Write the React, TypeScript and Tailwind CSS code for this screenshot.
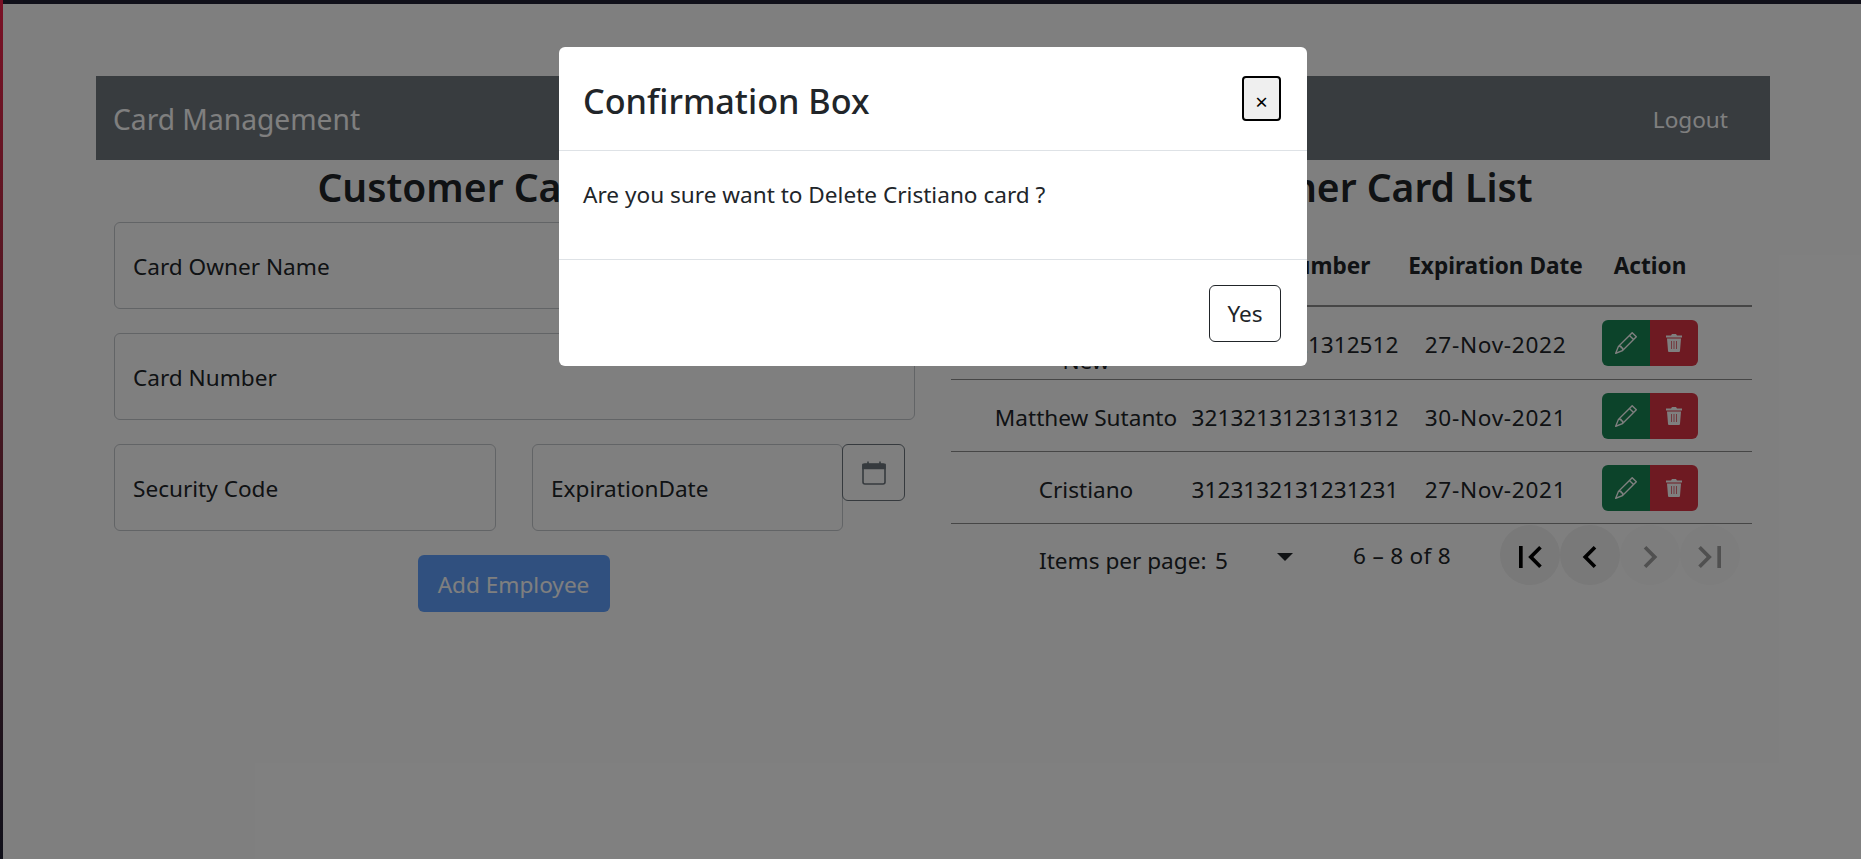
import { BsPencil } from "react-icons/bs";

const rows = [
  { name: "Test New", number: "3213213121312512", date: "27-Nov-2022" },
  { name: "Matthew Sutanto", number: "3213213123131312", date: "30-Nov-2021" },
  { name: "Cristiano", number: "3123132131231231", date: "27-Nov-2021" },
];

const pagerIcons = [
  { d: "M18.41 16.59L13.82 12l4.59-4.59L17 6l-6 6 6 6zM6 6h2v12H6z", on: true },
  { d: "M15.41 7.41 14 6l-6 6 6 6 1.41-1.41L10.83 12z", on: true },
  { d: "M10 6 8.59 7.41 13.17 12l-4.58 4.59L10 18l6-6z", on: false },
  { d: "M5.59 7.41 10.18 12l-4.59 4.59L7 18l6-6-6-6zM16 6h2v12h-2z", on: false },
];

function TrashIcon() {
  return (
    <svg viewBox="0 0 16 18" className="h-[18px] w-[16px] fill-white" fillRule="evenodd">
      <path d="M6 0h4l1 1.5h5v2H0v-2h5zM1 4.5h14l-1 12.2c0 .7-.6 1.3-1.3 1.3H3.3c-.7 0-1.3-.6-1.3-1.3zM5 7v8h.7V7zM7.65 7v8h.7V7zM10.3 7v8h.7V7z" />
    </svg>
  );
}

function CalendarIcon() {
  return (
    <svg viewBox="0 0 24 24" className="h-[24px] w-[24px] fill-none stroke-[#6c757d]">
      <rect x="1" y="3" width="22" height="20" rx="2" strokeWidth="1.6" />
      <path d="M1 3.5h22v4H1zM6 0.5v3M18 0.5v3" strokeWidth="1.6" className="fill-[#6c757d]" />
    </svg>
  );
}

function Field({ label, className }: { label: string; className: string }) {
  return (
    <div className={`flex h-[87px] items-center rounded-[6px] border border-[#c4c8cc] bg-white px-[18px] pt-[3px] text-[22.6px] text-[#212529] ${className}`}>
      {label}
    </div>
  );
}

function CardForm() {
  return (
    <section className="px-[18px]">
      <h2 className="mb-2 h-[54px] text-center text-[39px] leading-[54px] font-semibold whitespace-nowrap text-[#212529]">Customer Card Form</h2>
      <Field label="Card Owner Name" className="mb-[24px]" />
      <Field label="Card Number" className="mb-[24px]" />
      <div className="flex items-start">
        <Field label="Security Code" className="w-[382px]" />
        <Field label="ExpirationDate" className="ml-[36px] w-[311px]" />
        <button className="-ml-px flex h-[57px] w-[63px] items-center justify-center rounded-[6px] border border-[#6c757d]">
          <CalendarIcon />
        </button>
      </div>
      <div className="mt-[24px] flex justify-center pr-[2px]">
        <button className="h-[57px] w-[192px] rounded-[6px] bg-[#61a1fe] pt-[2px] text-[22.6px] text-white">Add Employee</button>
      </div>
    </section>
  );
}

function CardTable() {
  return (
    <section className="px-[18px]">
      <h2 className="mb-2 h-[54px] text-center text-[39px] leading-[54px] font-semibold whitespace-nowrap text-[#212529]">Customer Card List</h2>
      <table className="w-full table-fixed border-collapse text-center text-[22.6px] text-[#212529]">
        <colgroup>
          <col className="w-[37px]" />
          <col className="w-[196px]" />
          <col className="w-[222px]" />
          <col className="w-[179px]" />
          <col className="w-[130px]" />
          <col />
        </colgroup>
        <thead>
          <tr className="h-[84px] border-b-2 border-[#8c8c8c] font-bold">
            <th />
            <th className="pt-[4px] font-bold">Name</th>
            <th className="pt-[4px] font-bold whitespace-nowrap">Card Number</th>
            <th className="pt-[4px] font-bold whitespace-nowrap">Expiration Date</th>
            <th className="pt-[4px] font-bold">Action</th>
            <th />
          </tr>
        </thead>
        <tbody>
          {rows.map((row) => (
            <tr key={row.number} className="h-[72px] border-b border-[#8c8c8c]">
              <td />
              <td className="px-1 leading-[32px]">{row.name === "Test New" ? <span className="relative top-[4px] block h-[72px] pt-[2px]">Test<br />New</span> : <span className="inline-block pt-[4px] whitespace-nowrap">{row.name}</span>}</td>
              <td className="pt-[4px]">{row.number}</td>
              <td className="pt-[4px] tracking-[0.7px]">{row.date}</td>
              <td>
                <div className="flex justify-center">
                  <button className="flex h-[46px] w-[48px] items-center justify-center rounded-l-[6px] bg-[#198754] text-white"><BsPencil size={22} /></button>
                  <button className="flex h-[46px] w-[48px] items-center justify-center rounded-r-[6px] bg-[#dc3545]"><TrashIcon /></button>
                </div>
              </td>
              <td />
            </tr>
          ))}
        </tbody>
      </table>
      <div className="flex items-center pt-[1px] pl-[88px] text-[22.6px] text-[#212529]">
        <span className="w-[176px] pt-[12px] whitespace-nowrap">Items per page:</span>
        <span className="w-[62px] pt-[12px]">5</span>
        <span className="mt-[4px] h-0 w-0 border-x-[8px] border-t-[8px] border-x-transparent border-t-[#212529]" />
        <span className="ml-[60px] w-[147px] pt-[1px] tracking-[0.3px] whitespace-nowrap">6 – 8 of 8</span>
        <div className="flex">
          {pagerIcons.map((icon, i) => (
            <span key={i} className={`flex h-[60px] w-[60px] items-center justify-center rounded-full pt-[3px] ${icon.on ? "bg-[#f2f2f2]" : "bg-[#fafafa]"}`}>
              <svg viewBox="0 0 24 24" className={`h-[44px] w-[44px] ${icon.on ? "fill-black" : "fill-[#a0a0a0]"}`}>
                <path d={icon.d} />
              </svg>
            </span>
          ))}
        </div>
      </div>
    </section>
  );
}

export default function App() {
  return (
    <div className="relative h-[859px] w-[1861px] overflow-hidden bg-white font-['Noto_Sans',sans-serif]">
      <div className="px-[96px] pt-[76px]">
        <nav className="flex h-[84px] w-[1674px] items-center justify-between bg-[#70787f] pt-[2px] pr-[42px] pl-[17px] text-white">
          <span className="text-[28.2px]">Card Management</span>
          <span className="pt-[1px] text-[22.6px]">Logout</span>
        </nav>
        <div className="grid w-[1674px] grid-cols-2">
          <CardForm />
          <CardTable />
        </div>
      </div>

      {/* backdrop and modal */}
      <div className="absolute inset-0 flex justify-center bg-black/50 pt-[47px] pl-[5px]">
        <div className="flex h-[319px] w-[748px] flex-col rounded-[6px] bg-white text-[#212529]">
          <div className="flex h-[104px] items-start justify-between border-b border-[#dee2e6] pt-[32px] pr-[26px] pl-[24px]">
            <h1 className="text-[34.2px] leading-[44px] font-medium">Confirmation Box</h1>
            <button className="-mt-[3px] flex h-[45px] w-[39px] items-center justify-center rounded-[4px] border-2 border-black bg-[#efefef] pt-[6px] text-[22px] text-black">×</button>
          </div>
          <div className="h-[109px] border-b border-[#dee2e6] px-[24px] pt-[28px] text-[22.6px] leading-[32px]">Are you sure want to Delete Cristiano card ?</div>
          <div className="flex flex-1 justify-end px-[26px] pt-[25px]">
            <button className="h-[57px] w-[72px] rounded-[6px] border border-[#212529] text-[22.6px]">Yes</button>
          </div>
        </div>
      </div>

      {/* window edge */}
      <div className="absolute inset-x-0 top-0 h-[4px] bg-[#10101a]" />
      <div className="absolute inset-y-0 left-0 w-[3px] bg-gradient-to-b from-[#7a1025] to-[#10101a]" />
    </div>
  );
}
